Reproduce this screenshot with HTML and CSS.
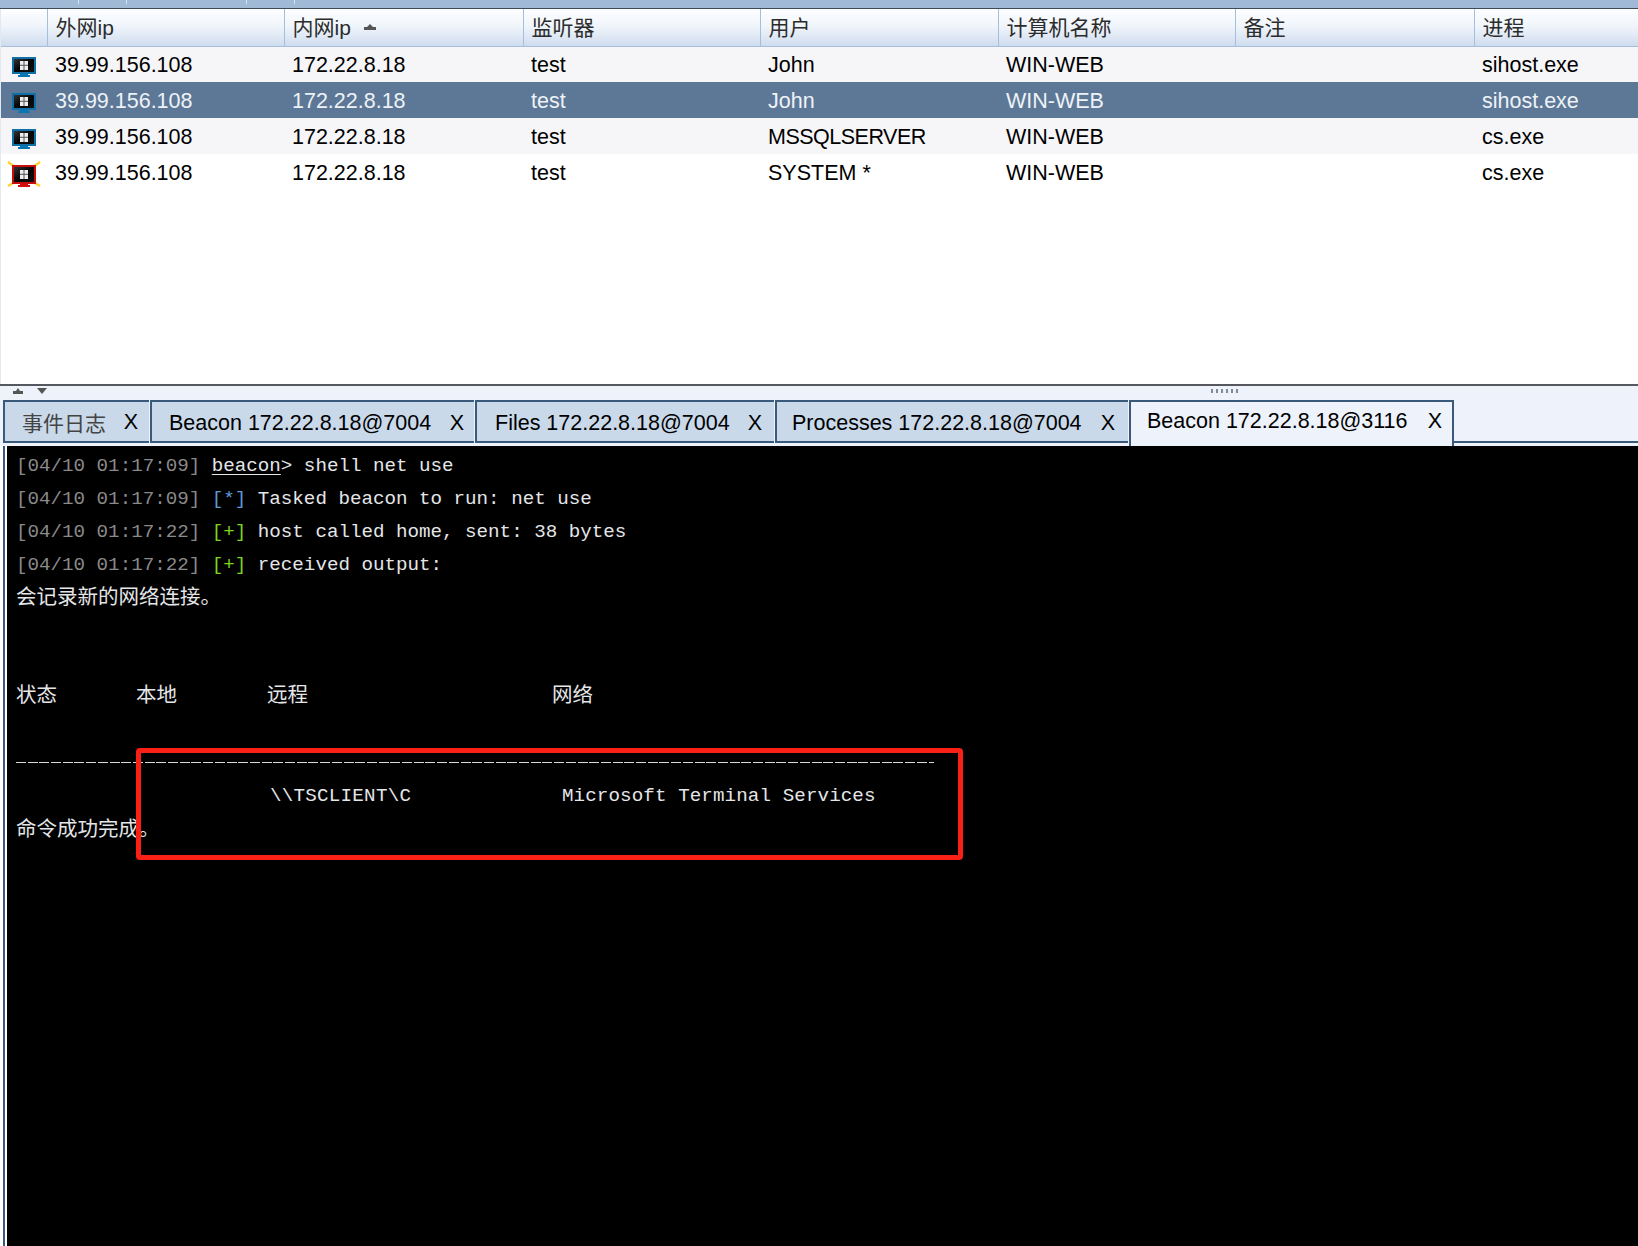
FILE: index.html
```html
<!DOCTYPE html>
<html lang="zh">
<head>
<meta charset="utf-8">
<title>Cobalt Strike</title>
<link rel="stylesheet" href="styles.css">
</head>
<body>
<svg class="defs" width="0" height="0" aria-hidden="true">
  <defs>
    <linearGradient id="scr" x1="0" y1="0" x2="1" y2="1"><stop offset="0" stop-color="#333"/><stop offset=".5" stop-color="#050505"/><stop offset="1" stop-color="#111"/></linearGradient>
    <symbol id="mon-blue" viewBox="0 0 26 22">
      <path d="M9 17h8v2h2v2H7v-2h2z" fill="#0a76b4"/>
      <rect x="1" y="1" width="24" height="17" fill="#0f6fa8"/>
      <rect x="3" y="3" width="20" height="13" fill="url(#scr)"/>
      <path d="M9 5h8v9H9z" fill="#eee"/>
      <path d="M9 9.3h8M13 5v9" stroke="#555" stroke-width="1"/>
    </symbol>
    <symbol id="mon-red" viewBox="0 0 34 28">
      <path d="M1 1l7 5M33 1l-7 5M1 25l7-4M33 25l-7-4" stroke="#fdd22e" stroke-width="2.4"/>
      <path d="M13 22h8v2h2v2H11v-2h2z" fill="#d40e0e"/>
      <rect x="5" y="4" width="24" height="19" fill="#c80d0d"/>
      <rect x="7" y="6" width="20" height="15" fill="url(#scr)"/>
      <path d="M13 9h8v9h-8z" fill="#eee"/>
      <path d="M13 13.3h8M17 9v9" stroke="#555" stroke-width="1"/>
    </symbol>
  </defs>
</svg>

<div class="topstrip">
  <span class="tick tick-a"></span><span class="tick tick-b"></span><span class="tick tick-c"></span><span class="tick tick-d"></span>
</div>

<section class="hosts">
  <table class="grid">
    <colgroup>
      <col class="c0"><col class="c1"><col class="c2"><col class="c3"><col class="c4"><col class="c5"><col class="c6"><col>
    </colgroup>
    <thead>
      <tr>
        <th></th><th>外网ip</th>
        <th>内网ip<svg class="sort" width="12" height="6" viewBox="0 0 12 6"><path d="M6 0l3 3h3v3H0V3h3z" fill="#555"/></svg></th>
        <th>监听器</th><th>用户</th><th>计算机名称</th><th>备注</th><th>进程</th>
      </tr>
    </thead>
    <tbody>
      <tr class="odd">
        <td class="ic"><svg class="mon" width="26" height="22"><use href="#mon-blue"/></svg></td>
        <td>39.99.156.108</td><td>172.22.8.18</td><td>test</td><td>John</td><td>WIN-WEB</td><td></td><td>sihost.exe</td>
      </tr>
      <tr class="sel">
        <td class="ic"><svg class="mon" width="26" height="22"><use href="#mon-blue"/></svg></td>
        <td>39.99.156.108</td><td>172.22.8.18</td><td>test</td><td>John</td><td>WIN-WEB</td><td></td><td>sihost.exe</td>
      </tr>
      <tr class="odd">
        <td class="ic"><svg class="mon" width="26" height="22"><use href="#mon-blue"/></svg></td>
        <td>39.99.156.108</td><td>172.22.8.18</td><td>test</td><td class="caps">MSSQLSERVER</td><td>WIN-WEB</td><td></td><td>cs.exe</td>
      </tr>
      <tr>
        <td class="ic"><svg class="mon-r" width="34" height="28"><use href="#mon-red"/></svg></td>
        <td>39.99.156.108</td><td>172.22.8.18</td><td>test</td><td>SYSTEM *</td><td>WIN-WEB</td><td></td><td>cs.exe</td>
      </tr>
    </tbody>
  </table>
</section>

<div class="splitter">
  <span class="arrows">
    <svg width="10" height="6" viewBox="0 0 10 6"><path d="M5 0l2 3h3v3H0V3h3z" fill="#555"/></svg>
    <svg width="10" height="6" viewBox="0 0 10 6"><path d="M0 0h10L5 6z" fill="#555"/></svg>
  </span>
  <span class="grip"></span>
</div>

<nav class="tabs">
  <div class="tab t1"><span class="cjk">事件日志</span><b class="x">X</b></div>
  <div class="tab t2"><span>Beacon 172.22.8.18@7004</span><b class="x">X</b></div>
  <div class="tab t3"><span>Files 172.22.8.18@7004</span><b class="x">X</b></div>
  <div class="tab t4"><span>Processes 172.22.8.18@7004</span><b class="x">X</b></div>
  <div class="tab active"><span>Beacon 172.22.8.18@3116</span><b class="x">X</b></div>
  <div class="tabfill"></div>
</nav>

<main class="console">
  <div class="term">
    <div class="line"><span class="ts">[04/10 01:17:09]</span> <u>beacon</u>&gt; shell net use</div>
    <div class="line"><span class="ts">[04/10 01:17:09]</span> <span class="star">[*]</span> Tasked beacon to run: net use</div>
    <div class="line"><span class="ts">[04/10 01:17:22]</span> <span class="plus">[+]</span> host called home, sent: 38 bytes</div>
    <div class="line"><span class="ts">[04/10 01:17:22]</span> <span class="plus">[+]</span> received output:</div>
    <div class="line zh">会记录新的网络连接。</div>
    <div class="line"></div>
    <div class="line"></div>
    <div class="line zh cols"><span class="s1">状态</span><span class="s2">本地</span><span class="s3">远程</span><span>网络</span></div>
    <div class="line"></div>
    <div class="line dash"></div>
    <div class="line cols low"><span class="share">\\TSCLIENT\C</span><span class="netname">Microsoft Terminal Services</span></div>
    <div class="line zh low">命令成功完成。</div>
  </div>
  <div class="redbox"></div>
</main>
</body>
</html>
```
FILE: styles.css
```css
* { box-sizing: border-box; }
html, body { margin: 0; padding: 0; }
body {
  width: 1638px;
  height: 1246px;
  overflow: hidden;
  background: #fff;
  display: flex;
  flex-direction: column;
  font-family: "Liberation Sans", "Noto Sans CJK SC", sans-serif;
  font-size: 21.5px;
  color: #000;
}
.defs { position: absolute; }

.topstrip {
  flex: 0 0 9px;
  display: flex;
  background: #a0b9d6;
  border-bottom: 1px solid #3c4a5a;
}
.tick { width: 1px; height: 4px; background: #d4e0ee; }
.tick-a { margin-left: 78px; }
.tick-b { margin-left: 47px; }
.tick-c { margin-left: 119px; }
.tick-d { margin-left: 47px; }

.hosts { flex: 0 0 375px; background: #fff; border-left: 1px solid #e4e8f0; }
.grid { width: 1637px; border-collapse: collapse; table-layout: fixed; }
.c0 { width: 46px; }
.c1 { width: 237px; }
.c2 { width: 239px; }
.c3 { width: 237px; }
.c4 { width: 238px; }
.c5 { width: 237px; }
.c6 { width: 239px; }

.grid th {
  height: 37px;
  padding: 0 0 2px 8px;
  text-align: left;
  font-weight: 400;
  font-size: 21px;
  color: #2c2c2c;
  background: linear-gradient(#fdfeff, #f0f5fb 45%, #cfdcee);
  border-left: 1px solid #a5bedb;
  border-bottom: 1px solid #a5bedb;
  white-space: nowrap;
}
.grid th:first-child { border-left: 0; }
.sort { margin-left: 13px; vertical-align: 5px; }

.grid td {
  height: 36px;
  padding: 2px 0 0 8px;
  white-space: nowrap;
}
.grid td.ic { padding: 5px 0 0 10px; line-height: 0; }
.grid td.caps { letter-spacing: -0.5px; }
.mon-r { margin-left: -4px; }
.odd td { background: #f6f6f9; }
.sel td { background: #5d7896; color: #eef2f7; }

.splitter {
  flex: 0 0 16px;
  position: relative;
  display: flex;
  justify-content: space-between;
  background: #eef2fb;
  border-top: 2px solid #55585f;
}
.arrows { display: flex; gap: 14px; margin: 2px 0 0 13px; align-items: flex-start; }
.arrows svg { display: block; }
.grip {
  width: 28px;
  height: 4px;
  margin: 3px 399px 0 0;
  background: repeating-linear-gradient(90deg, #7f8b99 0 2px, transparent 2px 5px);
}

.tabs { flex: 0 0 46px; display: flex; background: #eef2fb; padding-left: 3px; }
.tab {
  height: 43px;
  display: flex;
  align-items: center;
  justify-content: space-between;
  background: #c9d9ea;
  border-top: 2px solid #3a5a7c;
  border-bottom: 2px solid #3a5a7c;
  border-left: 2px solid #3a5a7c;
  white-space: nowrap;
}
.tab + .tab { border-left: 2px solid #3a5a7c; margin-left: 1px; }
.t1 { width: 146px; padding: 0 11px 0 17px; }
.t1 .cjk { color: #444; font-size: 21px; }
.t1 .x { position: relative; top: 1px; }
.t2 { width: 324px; padding: 3px 10px 0 17px; }
.t3 { width: 299px; padding: 3px 12px 0 18px; }
.t4 { width: 353px; padding: 3px 13px 0 15px; }
.tab.active {
  width: 325px;
  height: 46px;
  margin-left: 1px;
  padding: 0 10px 5px 16px;
  background: #eef2fb;
  border-bottom: 0;
  border-right: 2px solid #3a5a7c;
}
.tabfill { flex: 1; height: 43px; border-bottom: 2px solid #3a5a7c; }
.x { font-weight: 400; }

.console {
  flex: 1;
  position: relative;
  margin-left: 3px;
  border-left: 2px solid #3a5a7c;
  background: #fff;
  padding-left: 2px;
  min-height: 0;
}
.term {
  height: 100%;
  padding: 4px 0 0 9px;
  background: #000;
  color: #e4e6e8;
  font-family: "Liberation Mono", "Noto Sans CJK SC", monospace;
  font-size: 19.2px;
  overflow: hidden;
}
.line {
  height: 32.9px;
  line-height: 32.9px;
  white-space: pre;
}
.ts { color: #8a8a8a; }
.star { color: #5d9ad6; }
.plus { color: #7ed321; }
.term u { text-underline-offset: 3px; }
.zh { font-family: "Noto Sans CJK SC", sans-serif; font-size: 20.5px; position: relative; top: -3px; }
.cols { display: flex; }
.zh.low { top: -1px; }
.line.cols.low { position: relative; top: 1px; }
.s1 { width: 120px; }
.s2 { width: 131px; }
.s3 { width: 285px; }
.share { width: 292px; margin-left: 254px; letter-spacing: 0.25px; }
.netname { letter-spacing: 0.1px; }
.dash {
  width: 918px;
  background: repeating-linear-gradient(90deg, #d8d8d8 0 10px, transparent 10px 11.7px) 0 16px / 100% 1px no-repeat;
}
.redbox {
  position: absolute;
  left: 131px;
  top: 302px;
  width: 827px;
  height: 112px;
  border: 5px solid #fb2015;
  border-radius: 4px;
}
```
